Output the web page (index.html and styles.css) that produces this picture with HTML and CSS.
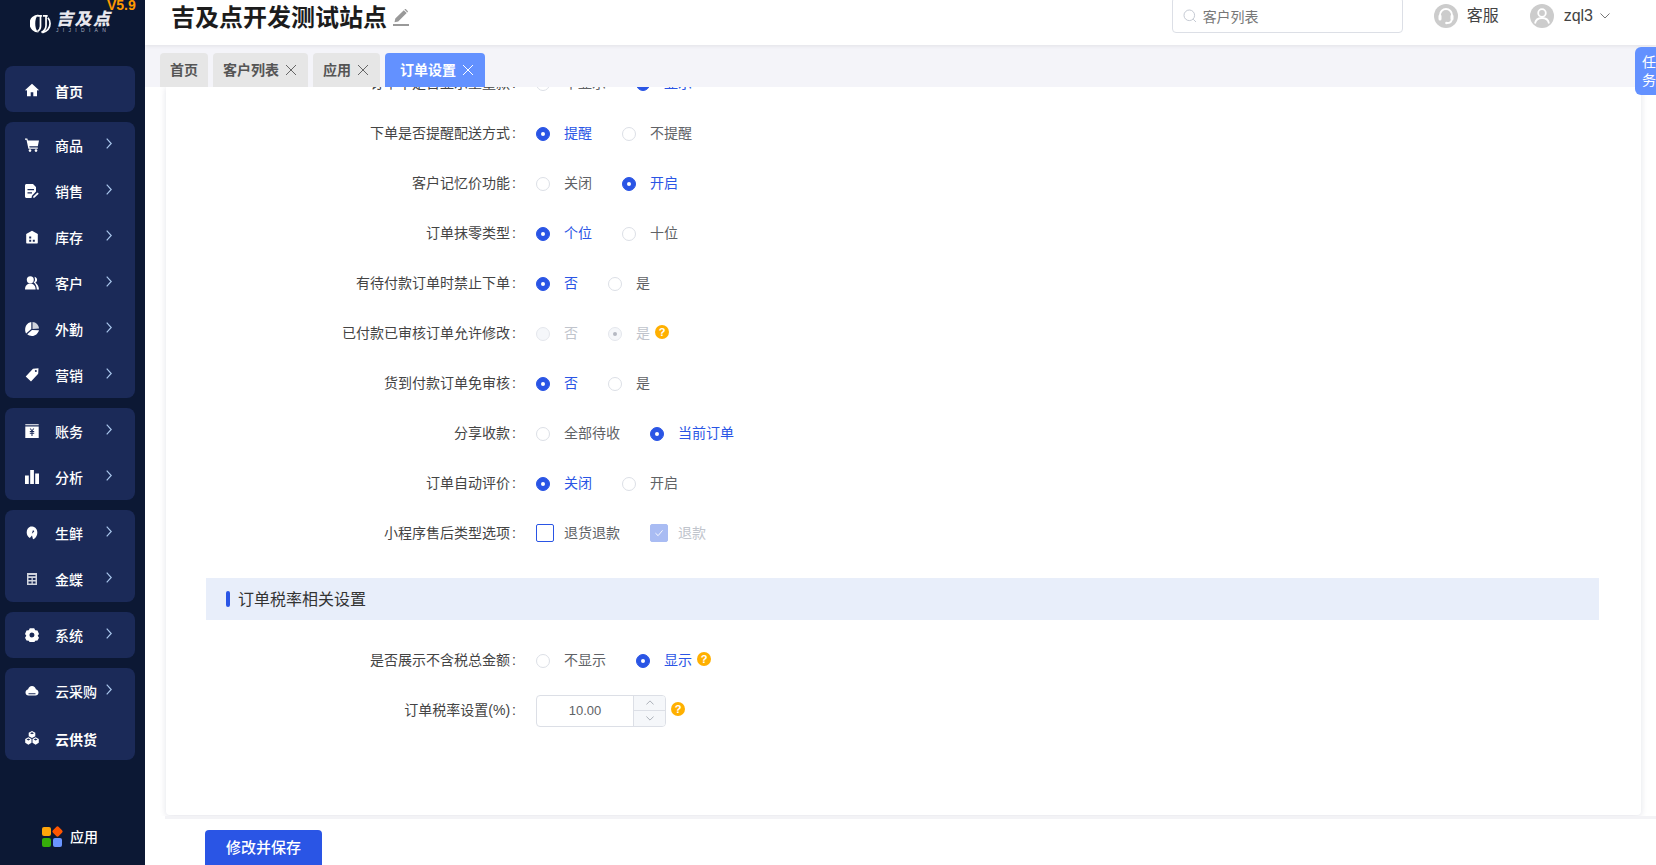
FILE: index.html
```html
<!DOCTYPE html>
<html lang="zh-CN">
<head>
<meta charset="utf-8">
<title>订单设置</title>
<link rel="stylesheet" href="styles.css">
</head>
<body>
<div class="app">
  <aside class="sidebar">
    <div class="logo">
      <span class="version">V5.9</span>
      <svg class="logo-mark" viewBox="0 0 22 22"><path d="M9 1.500A9.500 9.500 0 0 0 9 20.500C6 18 5.500 14 5.500 11S6 4 9 1.500z" fill="#fff"/><path d="M7.500 3H12.500M11 3V14C11 16.500 10 18 8 19.200" class="logo-stroke"/><path d="M13.500 3H18.500M16.800 3V13C16.800 16 15 18.500 12 20.500" class="logo-stroke"/><path d="M18.800 5C20.500 7 21 9 21 11C21 15.500 18 19 13 20.500" class="logo-stroke"/></svg>
      <div class="logo-words">
        <span class="logo-name">吉及点</span>
        <span class="logo-sub">JIJIDIAN</span>
      </div>
    </div>
    <nav class="nav">
      <div class="group">
        <a class="item item-solo"><svg class="ico" viewBox="0 0 14 14"><path d="M7 .8.200 6.900l.8.900 1-.9v6.300h3.700V9.300h2.600v3.900H12V6.900l1 .9.800-.9z"/></svg><span class="item-text strong">首页</span></a>
      </div>
      <div class="group">
        <a class="item"><svg class="ico" viewBox="0 0 14 14"><path d="M0 .5h2.300l.6 2H14l-1.200 5.800H4.300l.3 1.200H12.800v1.200H3.400L1.500 1.700H0z"/><circle cx="5" cy="12.600" r="1.300"/><circle cx="11" cy="12.600" r="1.300"/></svg><span class="item-text">商品</span><svg class="chev" viewBox="0 0 6 11"><path d="M.7.700 5.200 5.500.7 10.300"/></svg></a>
        <a class="item"><svg class="ico" viewBox="0 0 14 14"><path d="M1.500 0H8l3 3v4.500L7 11.800 6.500 14h-5C.7 14 0 13.300 0 12.500V1.500C0 .7.700 0 1.500 0zM2.500 5v1.300h6.500V5zM2.500 8.200v1.300h4.500V8.200z"/><path d="M12.500 8.500l1.200 1.200-4.300 4.100H8.200v-1.200z"/></svg><span class="item-text">销售</span><svg class="chev" viewBox="0 0 6 11"><path d="M.7.700 5.200 5.500.7 10.300"/></svg></a>
        <a class="item"><svg class="ico" viewBox="0 0 14 14"><path d="M7 .8 12.800 4v8.800c0 .4-.3.700-.7.700H1.900c-.4 0-.7-.3-.7-.7V4zM4.200 6.500v2h2v-2zM7.800 9.700v2h2v-2zM4.200 9.700v2h2v-2z"/></svg><span class="item-text">库存</span><svg class="chev" viewBox="0 0 6 11"><path d="M.7.700 5.200 5.500.7 10.300"/></svg></a>
        <a class="item"><svg class="ico" viewBox="0 0 14 14"><circle cx="5.300" cy="3.800" r="3.500"/><path d="M0 13.500c0-3.500 2-6 5.300-6s5.300 2.500 5.300 6z"/><path d="M9.500.8c1.600.4 2.600 1.600 2.600 3 0 1.300-.7 2.400-1.800 2.900 2 .8 3.400 3.300 3.700 6.800h-2.200c-.2-3.300-1.300-5.800-3.300-6.900 1-.8 1.500-1.800 1.500-2.900S9.600 1.600 9.500.8z"/></svg><span class="item-text">客户</span><svg class="chev" viewBox="0 0 6 11"><path d="M.7.700 5.200 5.500.7 10.300"/></svg></a>
        <a class="item"><svg class="ico" viewBox="0 0 14 14"><path d="M6.300 0v7l-5.200 4.500C-.8 8.900-.3 1 6.300 0z"/><path d="M7.500 0c3.500.2 6.300 3 6.500 6.400l-6.500.6z" opacity=".8"/><path d="M2.200 12.300 7 8l7 .2C13 11.600 10.300 14 7 14c-1.800 0-3.500-.6-4.800-1.700z"/></svg><span class="item-text">外勤</span><svg class="chev" viewBox="0 0 6 11"><path d="M.7.700 5.200 5.500.7 10.300"/></svg></a>
        <a class="item"><svg class="ico" viewBox="0 0 14 14"><path d="M8 .8 13.500.3 13.200 5.800 6 13.500.7 8.500zM10.800 2a1 1 0 1 0 .1 2 1 1 0 0 0-.1-2z"/></svg><span class="item-text">营销</span><svg class="chev" viewBox="0 0 6 11"><path d="M.7.700 5.200 5.500.7 10.300"/></svg></a>
      </div>
      <div class="group">
        <a class="item"><svg class="ico" viewBox="0 0 14 14"><path d="M.3.200h13.400v1H.3zM.3 2.500h13.400V14H.3zM4.700 4.500 6.500 7H4.800v1h1.700v.8H4.800v1h1.700V12h1V9.800h1.700v-1H7.500V8h1.700V7H7.500l1.800-2.500H8.100L7 6.200 5.900 4.500z"/></svg><span class="item-text">账务</span><svg class="chev" viewBox="0 0 6 11"><path d="M.7.700 5.200 5.500.7 10.300"/></svg></a>
        <a class="item"><svg class="ico" viewBox="0 0 14 14"><path d="M0 5.500h3.800V14H0zM5.200 0h3.700v14H5.200zM10.200 3.500H14V14h-3.800z"/></svg><span class="item-text">分析</span><svg class="chev" viewBox="0 0 6 11"><path d="M.7.700 5.200 5.500.7 10.300"/></svg></a>
      </div>
      <div class="group">
        <a class="item"><svg class="ico" viewBox="0 0 14 14"><path d="M5.500.5C9 .2 12 2 12.300 6c.2 3.400-1.500 6.500-4.300 7.300L7 9.500 4.800 12C3 11 1.700 9 1.700 6.500 1.700 3.800 3 1.300 5.500.5zM8 4 6.800 7.800l2.500-2.200z"/></svg><span class="item-text">生鲜</span><svg class="chev" viewBox="0 0 6 11"><path d="M.7.700 5.200 5.500.7 10.300"/></svg></a>
        <a class="item"><svg class="ico" viewBox="0 0 14 14" opacity=".8"><path d="M2 1h10v12H2zM3.500 3v1.300h7V3zM3.500 6v2h3V6zM7.800 6v2h2.700V6zM3.500 9.500v2h3v-2zM7.800 9.500v2h2.700v-2z"/></svg><span class="item-text">金蝶</span><svg class="chev" viewBox="0 0 6 11"><path d="M.7.700 5.200 5.500.7 10.300"/></svg></a>
      </div>
      <div class="group">
        <a class="item"><svg class="ico" viewBox="0 0 14 14"><path d="M4.800.2h4.400l1 2 2.300.3 1.500 3.400-1.300 1.800 1.300 2-1.500 2.700-2.300.3-1 1.800H4.800l-1-1.800-2.300-.3L0 9.700l1.300-2L0 5.900l1.500-3.400 2.300-.3zM7 4.500a2.500 2.500 0 1 0 0 5 2.500 2.500 0 0 0 0-5z"/></svg><span class="item-text">系统</span><svg class="chev" viewBox="0 0 6 11"><path d="M.7.700 5.200 5.500.7 10.300"/></svg></a>
      </div>
      <div class="group">
        <a class="item"><svg class="ico" viewBox="0 0 14 14"><path d="M7 2c2 0 3.500 1.300 3.900 3.200C12.500 5.500 13.500 7 13.500 8.500c0 1.700-1.300 3-3 3h-7c-1.700 0-3-1.300-3-3C.5 7 1.500 5.700 3.100 5.300 3.500 3.300 5 2 7 2zM3.500 9.300v1h7v-1z"/></svg><span class="item-text">云采购</span><svg class="chev" viewBox="0 0 6 11"><path d="M.7.700 5.200 5.500.7 10.300"/></svg></a>
        <a class="item item-solo"><svg class="ico" viewBox="0 0 14 14"><path d="M7 0l3.300 1.700v3.500L7 7 3.700 5.200V1.700zM7 1.200 5 2.200 7 3.300l2-1.100z"/><path d="M3.400 6.200l3.100 1.700v3.900L3.400 13.800.2 11.800V7.900zM3.400 7.400 1.500 8.400l1.900 1 1.900-1z"/><path d="M10.600 6.200l3.200 1.700v3.900l-3.200 2-3.100-2V7.900zM10.600 7.400l-1.900 1 1.900 1 1.900-1z"/></svg><span class="item-text strong">云供货</span></a>
      </div>
    </nav>
    <a class="apps">
      <span class="apps-grid">
        <i class="tile tile-orange"></i><i class="tile tile-red"></i><i class="tile tile-green"></i><i class="tile tile-blue"></i>
      </span>
      <span class="apps-text">应用</span>
    </a>
  </aside>

  <main class="main">
    <header class="header">
      <div class="title-wrap">
        <h1 class="title">吉及点开发测试站点</h1>
        <svg class="pencil" viewBox="0 0 16 17"><path d="M10.800 1.200l2.900 2.900-8.500 8.400-3.700.8.800-3.700zM11.800.2c.4-.3.900-.3 1.200 0l1.700 1.700c.3.300.3.800 0 1.200l-.4.400-2.900-2.900z"/><rect x="0" y="15" width="16" height="2"/></svg>
      </div>
      <div class="search">
        <svg class="search-ico" viewBox="0 0 14 14"><circle cx="6.300" cy="6.300" r="5.300"/><path d="M10.200 10.200 13 13"/></svg>
        <span class="search-text">客户列表</span>
      </div>
      <div class="tool tool-service">
        <span class="avatar"><svg viewBox="0 0 24 24"><path d="M6 14.500V11a6 6 0 0 1 12 0v3.500" class="av-line"/><rect x="4.500" y="10.500" width="3" height="6" rx="1.500" fill="#fff"/><rect x="16.500" y="10.500" width="3" height="6" rx="1.500" fill="#fff"/><path d="M17.500 16c0 2-2 3-4.500 3" class="av-line"/><circle cx="12.500" cy="19" r="1.300" fill="#fff"/></svg></span>
        <span class="tool-text">客服</span>
      </div>
      <div class="tool tool-user">
        <span class="avatar"><svg viewBox="0 0 24 24"><circle cx="12" cy="9" r="3.800" class="av-line"/><path d="M5 19.500c.6-3.700 3.500-5.500 7-5.500s6.400 1.800 7 5.500" class="av-line"/></svg></span>
        <span class="tool-text">zql3</span>
        <svg class="caret" viewBox="0 0 10 6"><path d="M.5.500 5 5 9.500.500"/></svg>
      </div>
    </header>

    <div class="tabs">
      <a class="tab">首页</a>
      <a class="tab">客户列表<svg class="tab-x" viewBox="0 0 12 12"><path d="M1 1l10 10M11 1 1 11"/></svg></a>
      <a class="tab">应用<svg class="tab-x" viewBox="0 0 12 12"><path d="M1 1l10 10M11 1 1 11"/></svg></a>
      <a class="tab tab-active">订单设置<svg class="tab-x" viewBox="0 0 12 12"><path d="M1 1l10 10M11 1 1 11"/></svg></a>
    </div>

    <a class="task">任务</a>

    <section class="scroller">
      <div class="card">
        <form class="form">
          <div class="row">
            <label class="label">订单中是否显示重量款<span class="colon">:</span></label>
            <div class="field"><span class="opt"><i class="radio"></i>不显示</span><span class="opt opt-on"><i class="radio"></i>显示</span></div>
          </div>
          <div class="row">
            <label class="label">下单是否提醒配送方式<span class="colon">:</span></label>
            <div class="field"><span class="opt opt-on"><i class="radio"></i>提醒</span><span class="opt"><i class="radio"></i>不提醒</span></div>
          </div>
          <div class="row">
            <label class="label">客户记忆价功能<span class="colon">:</span></label>
            <div class="field"><span class="opt"><i class="radio"></i>关闭</span><span class="opt opt-on"><i class="radio"></i>开启</span></div>
          </div>
          <div class="row">
            <label class="label">订单抹零类型<span class="colon">:</span></label>
            <div class="field"><span class="opt opt-on"><i class="radio"></i>个位</span><span class="opt"><i class="radio"></i>十位</span></div>
          </div>
          <div class="row">
            <label class="label">有待付款订单时禁止下单<span class="colon">:</span></label>
            <div class="field"><span class="opt opt-on"><i class="radio"></i>否</span><span class="opt"><i class="radio"></i>是</span></div>
          </div>
          <div class="row">
            <label class="label">已付款已审核订单允许修改<span class="colon">:</span></label>
            <div class="field"><span class="opt opt-off"><i class="radio"></i>否</span><span class="opt opt-off opt-offon"><i class="radio"></i>是</span><i class="help">?</i></div>
          </div>
          <div class="row">
            <label class="label">货到付款订单免审核<span class="colon">:</span></label>
            <div class="field"><span class="opt opt-on"><i class="radio"></i>否</span><span class="opt"><i class="radio"></i>是</span></div>
          </div>
          <div class="row">
            <label class="label">分享收款<span class="colon">:</span></label>
            <div class="field"><span class="opt"><i class="radio"></i>全部待收</span><span class="opt opt-on"><i class="radio"></i>当前订单</span></div>
          </div>
          <div class="row">
            <label class="label">订单自动评价<span class="colon">:</span></label>
            <div class="field"><span class="opt opt-on"><i class="radio"></i>关闭</span><span class="opt"><i class="radio"></i>开启</span></div>
          </div>
          <div class="row">
            <label class="label">小程序售后类型选项<span class="colon">:</span></label>
            <div class="field">
              <span class="check"><i class="box"></i>退货退款</span>
              <span class="check check-off"><i class="box"><svg viewBox="0 0 18 18"><path d="M5 9.200 8 12l5-6"/></svg></i>退款</span>
            </div>
          </div>

          <h2 class="section">订单税率相关设置</h2>

          <div class="row">
            <label class="label">是否展示不含税总金额<span class="colon">:</span></label>
            <div class="field"><span class="opt"><i class="radio"></i>不显示</span><span class="opt opt-on"><i class="radio"></i>显示</span><i class="help">?</i></div>
          </div>
          <div class="row">
            <label class="label">订单税率设置(%)<span class="colon">:</span></label>
            <div class="field">
              <div class="number">
                <span class="number-value">10.00</span>
                <span class="stepper">
                  <b class="step"><svg viewBox="0 0 10 6"><path d="M.5 5.500 5 1l4.500 4.500"/></svg></b>
                  <b class="step"><svg viewBox="0 0 10 6"><path d="M.5.500 5 5 9.500.500"/></svg></b>
                </span>
              </div>
              <i class="help help-input">?</i>
            </div>
          </div>
        </form>
      </div>
    </section>

    <footer class="footer">
      <button class="save" type="button">修改并保存</button>
    </footer>
  </main>
</div>
</body>
</html>
```
FILE: styles.css
```css
* { box-sizing: border-box; }
html, body { margin: 0; height: 100%; overflow: hidden; }
body { font-family: "Liberation Sans", "Noto Sans CJK SC", sans-serif; font-size: 14px; color: #333; background: #fff; }
.app { display: flex; height: 865px; }

/* sidebar */
.sidebar { width: 145px; flex: none; background: #0c1834; display: flex; flex-direction: column; position: relative; overflow: hidden; }
.logo { height: 66px; flex: none; display: flex; align-items: flex-start; padding: 13px 0 0 30px; gap: 5px; }
.version { position: absolute; left: 107px; top: -5px; font-size: 14px; font-weight: 700; color: #ff9900; line-height: 20px; }
.logo-mark { width: 21px; height: 21px; flex: none; }
.logo-stroke { fill: none; stroke: #fff; stroke-width: 1.800; }
.logo-words { display: flex; flex-direction: column; color: #e8e8ee; }
.logo-name { font-size: 17px; line-height: 14px; font-weight: 900; font-style: italic; letter-spacing: 1.500px; white-space: nowrap; }
.logo-sub { font-size: 5px; line-height: 7px; letter-spacing: 4.300px; white-space: nowrap; color: #aab0c0; }
.nav { display: flex; flex-direction: column; gap: 10px; padding: 0 10px 0 5px; }
.group { background: #1b2a58; border-radius: 8px; }
.item { height: 46px; display: flex; align-items: center; padding-left: 20px; color: #fff; }
.ico { width: 14px; height: 14px; fill: #fff; flex: none; margin-right: 16px; }
.item-text { width: 51px; flex: none; padding-top: 1px; line-height: 20px; font-weight: 500; white-space: nowrap; }
.item-solo .ico { margin-top: 2px; }
.item-solo .item-text { padding-top: 5px; }
.strong { font-weight: 700; }
.chev { width: 6px; height: 11px; fill: none; stroke: #a9c6ec; stroke-width: 1.200; margin-bottom: 3px; }
.apps { margin-top: auto; margin-bottom: 18px; display: flex; align-items: center; padding-left: 42px; color: #fff; gap: 8px; }
.apps-grid { display: grid; grid-template-columns: 9px 9px; grid-auto-rows: 9px; gap: 2px 2px; }
.tile { display: block; border-radius: 2px; }
.tile-orange { background: #ffa50a; }
.tile-red { background: #ff5500; transform: rotate(45deg) scale(.92); }
.tile-green { background: #36ad0a; }
.tile-blue { background: #6a95ff; }
.apps-text { line-height: 20px; font-weight: 500; }

/* main */
.main { flex: 1; min-width: 0; display: flex; flex-direction: column; position: relative; }
.header { height: 45px; flex: none; display: flex; align-items: center; padding: 0 0 15px 26px; background: #fff; box-shadow: 0 1px 4px rgba(0,0,0,.08); position: relative; z-index: 2; }
.title-wrap { display: flex; align-items: center; gap: 6px; margin-top: 5px; margin-right: auto; }
.title { margin: 0; font-size: 24px; line-height: 34px; font-weight: 700; color: #1c1c1c; }
.pencil { width: 16px; height: 17px; fill: #999; }
.search { width: 231px; height: 36px; flex: none; border: 1px solid #dcdfe6; border-radius: 4px; display: flex; align-items: center; padding-left: 10px; gap: 6px; margin-right: 31px; }
.search-ico { width: 14px; height: 14px; fill: none; stroke: #c5cad3; stroke-width: 1; margin-top: 1px; }
.search-text { color: #777; padding-top: 2px; }
.tool { display: flex; align-items: center; margin-top: 2px; }
.avatar { width: 24px; height: 24px; border-radius: 50%; background: #cccccc; display: block; }
.avatar svg { width: 24px; height: 24px; display: block; }
.av-line { fill: none; stroke: #fff; stroke-width: 1.800; }
.tool-text { font-size: 16px; color: #444; margin-left: 9px; line-height: 24px; }
.tool-service { margin-right: 31px; }
.tool-user { margin-right: 46px; }
.tool-user .tool-text { margin-left: 10px; }
.caret { width: 10px; height: 6px; fill: none; stroke: #777; stroke-width: 1; margin-left: 7px; }

/* tabs */
.tabs { height: 42px; flex: none; background: #f4f4f9; display: flex; align-items: flex-end; gap: 5px; padding-left: 15px; position: relative; z-index: 1; }
.tab { height: 34px; display: flex; align-items: center; padding: 0 10px; background: #e6e6e6; border-radius: 4px 4px 0 0; color: #555; font-weight: 700; line-height: 20px; }
.tab-x { width: 12px; height: 12px; margin: 0 1px 0 6px; fill: none; stroke: #666; stroke-width: 1; }
.tab-active { background: #6391ff; color: #fff; padding-left: 15px; }
.tab-active .tab-x { stroke: #fff; }
.task { position: absolute; right: 0; top: 47px; width: 21px; height: 48px; background: #6391ff; color: #fff; border-radius: 6px 0 0 6px; padding: 6px 0 0 7px; line-height: 18px; z-index: 3; font-size: 14px; overflow: hidden; }

/* form card */
.scroller { flex: 1; min-height: 0; padding: 0 15px 1px 21px; overflow: hidden; }
.card { height: 100%; background: #fff; border-radius: 0 0 4px 4px; box-shadow: 0 1px 6px rgba(40,50,90,.14); overflow: hidden; }
.form { margin-top: -29px; }
.row { height: 50px; display: flex; align-items: center; }
.label { width: 350px; flex: none; text-align: right; color: #444; line-height: 20px; }
.colon { margin-left: 2px; }
.field { display: flex; align-items: center; margin-left: 20px; color: #606266; line-height: 20px; }
.opt { display: flex; align-items: center; margin-right: 30px; }
.opt:last-of-type { margin-right: 0; }
.radio { width: 14px; height: 14px; border-radius: 50%; border: 1px solid #dcdfe6; background: #fff; margin-right: 14px; display: flex; align-items: center; justify-content: center; margin-top: 1px; }
.opt-on { color: #2a55e5; }
.opt-on .radio { background: #2a55e5; border-color: #2a55e5; }
.opt-on .radio::after { content: ""; width: 4px; height: 4px; border-radius: 50%; background: #fff; }
.opt-off { color: #c0c4cc; }
.opt-off .radio { background: #f5f7fa; border-color: #e4e7ed; }
.opt-offon .radio::after { content: ""; width: 4px; height: 4px; border-radius: 50%; background: #b5b9c2; }
.help { width: 14px; height: 14px; border-radius: 50%; background: #ffb000; color: #fff; font-style: normal; font-size: 11px; font-weight: 700; line-height: 14px; text-align: center; margin: 0 0 2px 5px; display: block; flex: none; }
.help-input { margin-left: 5px; }
.check { display: flex; align-items: center; margin-right: 30px; }
.box { width: 18px; height: 18px; border: 1px solid #2a55e5; border-radius: 2px; background: #fff; margin-right: 10px; display: block; }
.check-off { color: #c0c4cc; margin-right: 0; }
.check-off .box { background: #a9bcf3; border-color: #a9bcf3; }
.box svg { width: 16px; height: 16px; display: block; fill: none; stroke: #fff; stroke-width: 1; }
.section { margin: 20px 42px 15px 40px; height: 42px; padding: 0 0 3px 20px; background: #e8eefa; font-size: 16px; font-weight: 400; color: #333; display: flex; align-items: center; }
.section::before { content: ""; width: 4px; height: 16px; background: #2a55e5; border-radius: 2px; margin: 3px 8px 0 0; }
.number { width: 130px; height: 32px; border: 1px solid #dcdfe6; border-radius: 4px; display: flex; overflow: hidden; margin-top: 1px; }
.number-value { flex: 1; text-align: center; line-height: 30px; color: #606266; font-size: 13px; }
.stepper { width: 32px; flex: none; border-left: 1px solid #dcdfe6; background: #f5f7fa; display: flex; flex-direction: column; }
.step { flex: 1; display: flex; align-items: center; justify-content: center; }
.step + .step { border-top: 1px solid #dcdfe6; }
.step svg { width: 8px; height: 5px; fill: none; stroke: #9a9fa8; stroke-width: 1; }

/* footer */
.footer { height: 49px; flex: none; margin-left: 20px; border-top: 3px solid #f3f3f6; padding: 11px 0 0 40px; overflow: hidden; }
.save { width: 117px; height: 44px; border: 0; border-radius: 4px; background: #2a55e5; color: #fff; font: 500 15px/20px "Liberation Sans", "Noto Sans CJK SC", sans-serif; padding: 0 0 9px; display: block; }
```
